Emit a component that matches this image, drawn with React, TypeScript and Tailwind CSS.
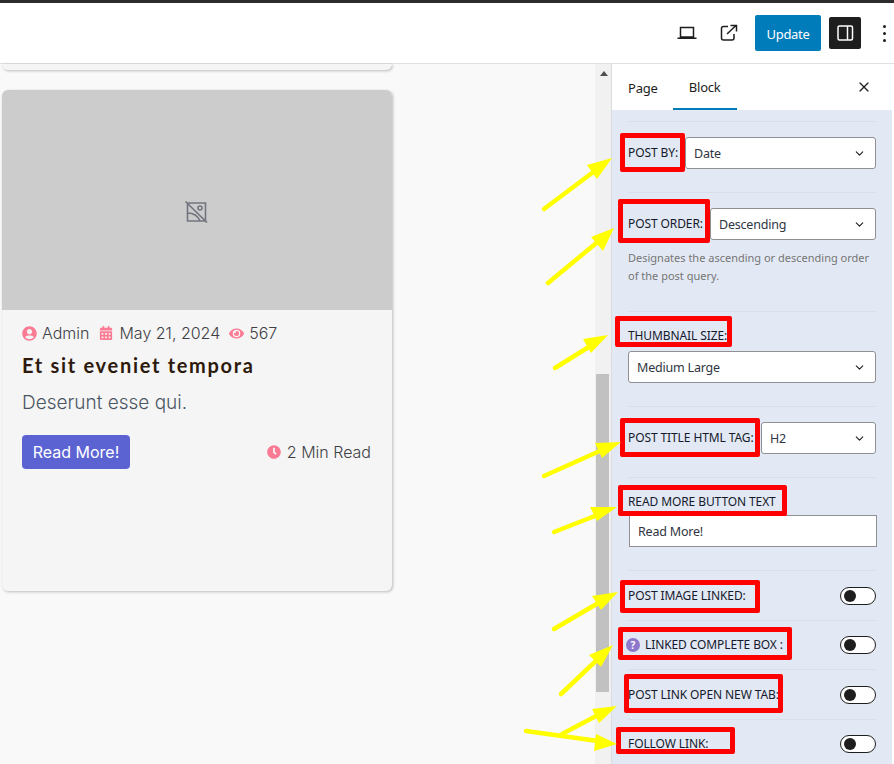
import { FaUserCircle, FaCalendarAlt, FaEye, FaClock } from "react-icons/fa";
import { X, ChevronDown } from "lucide-react";

const SIDEBAR_FONT = "font-['Noto_Sans','Open_Sans',sans-serif]";

function SelectBox({ value, className }: { value: string; className: string }) {
  return (
    <div
      className={`flex h-8 items-center justify-between rounded-[3px] border border-[#8f8f94] bg-white pl-2 pr-[9px] text-[12.5px] tracking-[-0.2px] text-[#2f3542] ${className}`}
    >
      <span className="pt-[2px]">{value}</span>
      <ChevronDown size={13} strokeWidth={2} className="text-[#1e1e1e]" />
    </div>
  );
}

function Label({ children }: { children: React.ReactNode }) {
  return <span className="text-[12px] font-normal leading-4 tracking-[-0.1px] text-[#141a2b]">{children}</span>;
}

function Toggle() {
  return (
    <div className="flex h-[18px] w-9 items-center rounded-full border border-[#1e1e1e] bg-white pl-[3px]">
      <div className="h-3 w-3 rounded-full bg-[#1e1e1e]" />
    </div>
  );
}

function ToggleRow({ children, height }: { children: React.ReactNode; height: string }) {
  return (
    <div className={`flex items-center justify-between border-t border-[#d9dfea] ${height}`}>
      {children}
      <Toggle />
    </div>
  );
}

function Annotations() {
  return (
    <div className="pointer-events-none absolute inset-0">
      <div className="absolute left-[620px] top-[133px] h-[39px] w-[65px] rounded-[2px] border-[5px] border-[#ff0000]" />
      <div className="absolute left-[618px] top-[199px] h-[44px] w-[92px] rounded-[2px] border-[5px] border-[#ff0000]" />
      <div className="absolute left-[615px] top-[316px] h-[31px] w-[117px] rounded-[2px] border-[5px] border-[#ff0000]" />
      <div className="absolute left-[620px] top-[418px] h-[39px] w-[140px] rounded-[2px] border-[5px] border-[#ff0000]" />
      <div className="absolute left-[618px] top-[485px] h-[31px] w-[169px] rounded-[2px] border-[5px] border-[#ff0000]" />
      <div className="absolute left-[620px] top-[580px] h-[33px] w-[140px] rounded-[2px] border-[5px] border-[#ff0000]" />
      <div className="absolute left-[618px] top-[627px] h-[33px] w-[174px] rounded-[2px] border-[5px] border-[#ff0000]" />
      <div className="absolute left-[624px] top-[674px] h-[39px] w-[159px] rounded-[2px] border-[5px] border-[#ff0000]" />
      <div className="absolute left-[616px] top-[727px] h-[27px] w-[119px] rounded-[2px] border-[5px] border-[#ff0000]" />
      {/* yellow arrows drawn on the screenshot */}
      <svg width="894" height="764" className="absolute left-0 top-0">
        <g stroke="#ffff00" strokeWidth="4.5" strokeLinecap="round">
          <line x1="544" y1="209" x2="596" y2="170" />
          <line x1="548" y1="283" x2="600" y2="240" />
          <line x1="555" y1="368" x2="592" y2="345" />
          <line x1="544" y1="476" x2="602" y2="450" />
          <line x1="554" y1="532" x2="600" y2="514" />
          <line x1="554" y1="629" x2="600" y2="602" />
          <line x1="561" y1="694" x2="600" y2="657" />
          <line x1="562" y1="734" x2="600" y2="714" />
          <line x1="526" y1="731" x2="598" y2="741" />
        </g>
        <g fill="#ffff00">
          <polygon points="612,158 597,179 587,165" />
          <polygon points="614,228 603,251 591,237" />
          <polygon points="608,335 591,353 583,339" />
          <polygon points="621,442 602,458 595,443" />
          <polygon points="617,507 597,521 590,507" />
          <polygon points="618,592 601,610 592,596" />
          <polygon points="613,645 601,667 589,655" />
          <polygon points="617,706 599,723 592,709" />
          <polygon points="617,744 594,751 596,734" />
        </g>
      </svg>
    </div>
  );
}

export default function App() {
  return (
    <div className="relative h-[764px] w-[894px] overflow-hidden bg-white">
      <div className="h-[3px] bg-[#2c2c2c]" />

      {/* top bar */}
      <div className="flex h-[61px] items-center justify-end border-b border-[#e0e0e0] bg-white">
        <svg width="24" height="24" viewBox="0 0 24 24" fill="none" stroke="#1e1e1e" strokeWidth="1.5" className="mr-[17px]">
          <path d="M5.5 6.5h13v9.5h-13zM2.5 17.25h19" />
        </svg>
        <svg width="24" height="24" viewBox="0 0 24 24" fill="none" stroke="#1e1e1e" strokeWidth="1.5" className="mr-[15px]">
          <path d="M12 5.5H7.5a2 2 0 0 0-2 2V17a2 2 0 0 0 2 2H16a2 2 0 0 0 2-2v-4M11 13l9-8.5M14.5 4.5H20.5V10.5" />
        </svg>
        <button className="h-9 w-[66px] rounded-[2px] bg-[#007cba] pt-[3px] font-['Noto_Sans'] text-[13px] tracking-[-0.3px] text-white">Update</button>
        <div className="ml-2 flex h-8 w-8 items-center justify-center rounded-[2px] bg-[#1e1e1e]">
          <svg width="24" height="24" viewBox="0 0 24 24" fill="none" stroke="#fff" strokeWidth="1.5">
            <rect x="5" y="5" width="14.5" height="14" rx="1.5" />
            <path d="M14.5 5v14" />
          </svg>
        </div>
        <div className="ml-[22px] mr-2 flex flex-col gap-[4px]">
          <div className="h-[3px] w-[3px] rounded-full bg-[#1e1e1e]" />
          <div className="h-[3px] w-[3px] rounded-full bg-[#1e1e1e]" />
          <div className="h-[3px] w-[3px] rounded-full bg-[#1e1e1e]" />
        </div>
      </div>

      <div className="flex h-[700px]">
        {/* canvas */}
        <div className="w-[595px] bg-[#f9f9f9] pl-[2px] font-['Inter',sans-serif]">
          <div className="h-[6px] w-[390px] rounded-b-md bg-[#f5f5f5] shadow-[1px_1px_3px_rgba(0,0,0,0.25)]" />
          <div className="mt-5 h-[501px] w-[390px] overflow-hidden rounded-md bg-[#f5f5f5] shadow-[1px_1px_3px_rgba(0,0,0,0.25)]">
            <div className="flex h-[220px] items-center justify-center bg-[#cccccc]">
              <svg width="24" height="24" viewBox="0 0 24 24" fill="none" stroke="#70757f" strokeWidth="1.6" className="mr-[2px] mt-[21px]">
                <path d="M3.5 4h18v18h-18zM1.5 2.5l21.5 21M3.5 14c5 0 10 2 12.5 8" />
                <circle cx="16" cy="9" r="2" />
              </svg>
            </div>
            <div className="px-5 pt-[13px]">
              <div className="flex h-5 items-center text-[16px] font-light text-[#3f3f46]">
                <FaUserCircle size={15} className="text-[#fb7a94]" />
                <span className="ml-[5px]">Admin</span>
                <FaCalendarAlt size={14} className="ml-[10px] text-[#fb7a94]" />
                <span className="ml-[6px]">May 21, 2024</span>
                <FaEye size={15} className="ml-[9px] text-[#fb7a94]" />
                <span className="ml-[5px]">567</span>
              </div>
              <h2 className="mt-[9px] font-['Lato',sans-serif] text-[20px] font-bold leading-[26px] tracking-[1.7px] text-[#2d1a0c]">
                Et sit eveniet tempora
              </h2>
              <p className="mt-[11px] text-[19px] font-light leading-[28px] text-[#4b5563]">Deserunt esse qui.</p>
              <div className="mt-[18px] flex items-center justify-between pr-px">
                <button className="h-[34px] w-[108px] rounded-[4px] bg-[#5b63d3] text-[16px] text-white">Read More!</button>
                <div className="flex items-center text-[16px] font-light text-[#3f3f46]">
                  <FaClock size={14} className="text-[#fb7a94]" />
                  <span className="ml-[6px]">2 Min Read</span>
                </div>
              </div>
            </div>
          </div>
        </div>

        {/* canvas scrollbar */}
        <div className="w-4 bg-[#f1f1f1] pl-px">
          <div className="flex h-[310px] justify-center pt-[7px]">
            <div className="h-0 w-0 border-x-[4px] border-b-[5px] border-x-transparent border-b-[#505050]" />
          </div>
          <div className="h-[318px] w-[13px] bg-[#c1c1c1]" />
        </div>

        {/* settings sidebar */}
        <div className={`w-[283px] border-l border-[#dcdcde] bg-white pr-[2px] ${SIDEBAR_FONT}`}>
          <div className="flex h-[46px] items-stretch text-[13px] tracking-[-0.2px] text-[#1e1e1e]">
            <div className="flex items-center pl-4 pr-[15px] pt-[3px]">Page</div>
            <div className="flex w-16 items-center justify-center border-b-2 border-[#007cba] pt-1">Block</div>
            <div className="ml-auto flex items-center pr-5">
              <X size={16} strokeWidth={1.8} />
            </div>
          </div>
          <div className="h-[654px] bg-[#e3e9f4] pl-4 pr-4 pt-[11px]">
            <div className="border-t border-[#d9dfea] pb-[23px] pt-[15px]">
              <div className="flex items-center justify-between">
                <Label>POST BY:</Label>
                <SelectBox value="Date" className="w-[191px]" />
              </div>
            </div>
            <div className="border-t border-[#d9dfea] pb-[26px] pt-[15px]">
              <div className="flex items-center justify-between">
                <Label>POST ORDER:</Label>
                <SelectBox value="Descending" className="w-[166px]" />
              </div>
              <p className="mt-[9px] text-[11px] leading-[18px] text-[#757575]">
                Designates the ascending or descending order of the post query.
              </p>
            </div>
            <div className="border-t border-[#d9dfea] pb-[23px] pt-[14px]">
              <div className="mb-[9px] h-4 leading-4">
                <Label>THUMBNAIL SIZE:</Label>
              </div>
              <SelectBox value="Medium Large" className="w-full" />
            </div>
            <div className="border-t border-[#d9dfea] pb-[23px] pt-[15px]">
              <div className="flex items-center justify-between">
                <Label>POST TITLE HTML TAG:</Label>
                <SelectBox value="H2" className="w-[115px]" />
              </div>
            </div>
            <div className="border-t border-[#d9dfea] pb-[23px] pt-[14px]">
              <div className="mb-[7px] h-4 leading-4">
                <Label>READ MORE BUTTON TEXT</Label>
              </div>
              <div className="-mr-px ml-px flex h-8 items-center border border-[#8f8f94] bg-white pl-2 pt-[2px] text-[12.5px] tracking-[-0.2px] text-[#2f3542]">
                Read More!
              </div>
            </div>
            <ToggleRow height="h-[50px]">
              <Label>POST IMAGE LINKED:</Label>
            </ToggleRow>
            <ToggleRow height="h-[49px]">
              <div className="flex items-center">
                <div className="-ml-[2px] mr-[5px] flex h-[14px] w-[14px] items-center justify-center rounded-full bg-[#8e78cc] text-[10px] font-bold text-white">
                  ?
                </div>
                <Label>LINKED COMPLETE BOX :</Label>
              </div>
            </ToggleRow>
            <ToggleRow height="h-[50px]">
              <Label>POST LINK OPEN NEW TAB:</Label>
            </ToggleRow>
            <ToggleRow height="h-[49px]">
              <Label>FOLLOW LINK:</Label>
            </ToggleRow>
          </div>
        </div>
      </div>

      <Annotations />
    </div>
  );
}
